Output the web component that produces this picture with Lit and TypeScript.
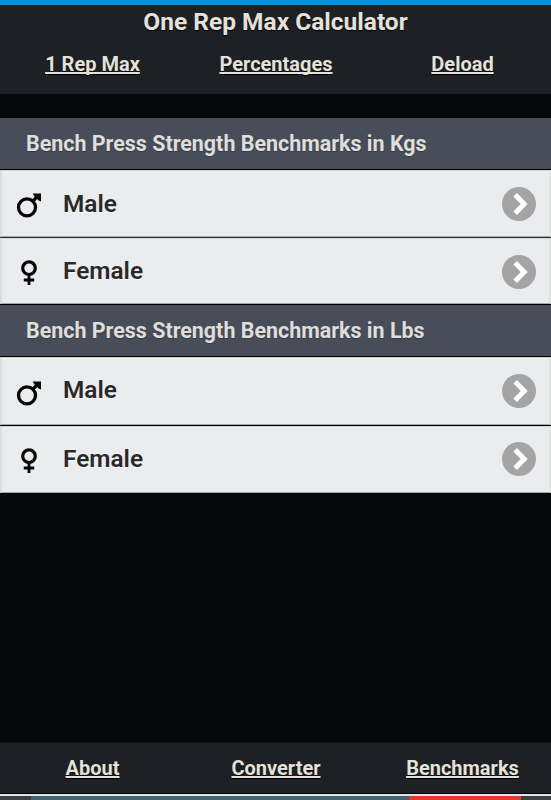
import { LitElement, html, css, svg } from "lit";
import { customElement, property } from "lit/decorators.js";

const male = svg`<circle cx="11" cy="15.4" r="8.5" fill="none" stroke="#070707" stroke-width="3.3"/>
  <path d="M16.8 9.2 20.5 5.4" stroke="#070707" stroke-width="3.4"/><path d="M16.6 1.4H25V9.4L22.6 8.4 18.6 4.4Z" fill="#070707"/>`;
const female = svg`<circle cx="13" cy="8.2" r="6.3" fill="none" stroke="#070707" stroke-width="3.2"/>
  <path d="M13 14.5V25M7.8 20H18.2" fill="none" stroke="#070707" stroke-width="2.8"/>`;

@customElement("nav-bar")
class NavBar extends LitElement {
  @property({ attribute: false }) items: string[] = [];
  static styles = css`
    :host { display: grid; grid-template-columns: 185px 182px 191px; justify-items: center; }
    a {
      color: #e5e1db; font-size: 20px; line-height: 24px; font-weight: 700;
      white-space: nowrap; text-decoration: underline; text-decoration-thickness: 2px;
      text-underline-offset: 1px; text-decoration-skip-ink: none; text-shadow: 0 1px 1px #000;
    }
  `;
  render() {
    return this.items.map((t) => html`<a>${t}</a>`);
  }
}

@customElement("benchmark-row")
class BenchmarkRow extends LitElement {
  @property() label = "Male";
  static styles = css`
    :host {
      display: flex; align-items: center; box-sizing: border-box; padding: 0 13px 0 14px;
      background: #ebecee; border: solid; border-width: 1px 2px;
      border-color: #d4d4d3 #e1e2e2 #a5a5a5 #dcdddd;
    }
    .gender { width: 26px; height: 27px; flex: none; margin-top: 4px; }
    .label {
      flex: 1; margin: 0 0 var(--lift, 0px) 21px; color: #292929; font-size: 24.4px; line-height: 28px;
      font-weight: 600; text-shadow: 0 1px 0 #fff;
    }
    .go { width: 34px; height: 34px; flex: none; margin: 1px 0 var(--lift, 0px); }
  `;
  render() {
    return html`
      <svg class="gender" viewBox="0 0 26 27">${this.label === "Male" ? male : female}</svg>
      <span class="label">${this.label}</span>
      <svg class="go" viewBox="0 0 34 34">
        <circle cx="17" cy="17" r="17" fill="#a4a4a4" />
        <path d="M13.2 7.8 22.2 17 13.2 26.2" fill="none" stroke="#fff" stroke-width="5" />
      </svg>`;
  }
}

@customElement("app-root")
class AppRoot extends LitElement {
  static styles = css`
    :host {
      display: flex; flex-direction: column; height: 800px; overflow: hidden;
      background: #070809; font-family: Roboto, "Liberation Sans", sans-serif;
    }
    header { height: 94px; box-sizing: border-box; background: #1d2024; border-top: 5px solid #148cdc; }
    h1 {
      margin: 3px 0 16px; text-align: center; color: #e5e1db; font-size: 24.5px;
      line-height: 28px; font-weight: 700; text-shadow: 0 1px 1px #000;
    }
    main { flex: 1; padding-top: 23px; }
    h2 {
      margin: 0; box-sizing: border-box; height: 53px; padding-left: 26px; color: #e0deda;
      background: #474e5a; border-top: 1px solid #000; border-bottom: 1px solid #000;
      font-size: 21.45px; line-height: 51px; font-weight: 700; text-shadow: 0 1px 1px #333944;
    }
    benchmark-row { height: 66px; }
    .kgs h2 + benchmark-row { height: 67px; }
    .divider { height: 1px; background: #333; }
    .lbs .divider { background: #000; }
    .lbs benchmark-row { height: 68px; --lift: 2px; }
    .lbs benchmark-row:last-child { height: 67px; }
    footer {
      height: 52px; box-sizing: border-box; padding-top: 13px; background: #1d2024;
      border-top: 1px solid #101215; border-bottom: 1px solid #000;
    }
    .strip {
      height: 6px; box-sizing: border-box; display: flex; background: #3d4142;
      border-top: 2px solid #dfe5e8;
    }
    .edge { width: 31px; }
    .steel { width: 378px; background: #456270; }
    .red { width: 112px; background: #e8372f; }
  `;
  section(unit: string) {
    return html`<section class=${unit.toLowerCase()}>
      <h2>Bench Press Strength Benchmarks in ${unit}</h2>
      <benchmark-row label="Male"></benchmark-row>
      <div class="divider"></div>
      <benchmark-row label="Female"></benchmark-row>
    </section>`;
  }
  render() {
    return html`
      <header>
        <h1>One Rep Max Calculator</h1>
        <nav-bar .items=${["1 Rep Max", "Percentages", "Deload"]}></nav-bar>
      </header>
      <main>${this.section("Kgs")}${this.section("Lbs")}</main>
      <footer><nav-bar .items=${["About", "Converter", "Benchmarks"]}></nav-bar></footer>
      <div class="strip">
        <div class="edge"></div><div class="steel"></div><div class="red"></div>
      </div>`;
  }
}
